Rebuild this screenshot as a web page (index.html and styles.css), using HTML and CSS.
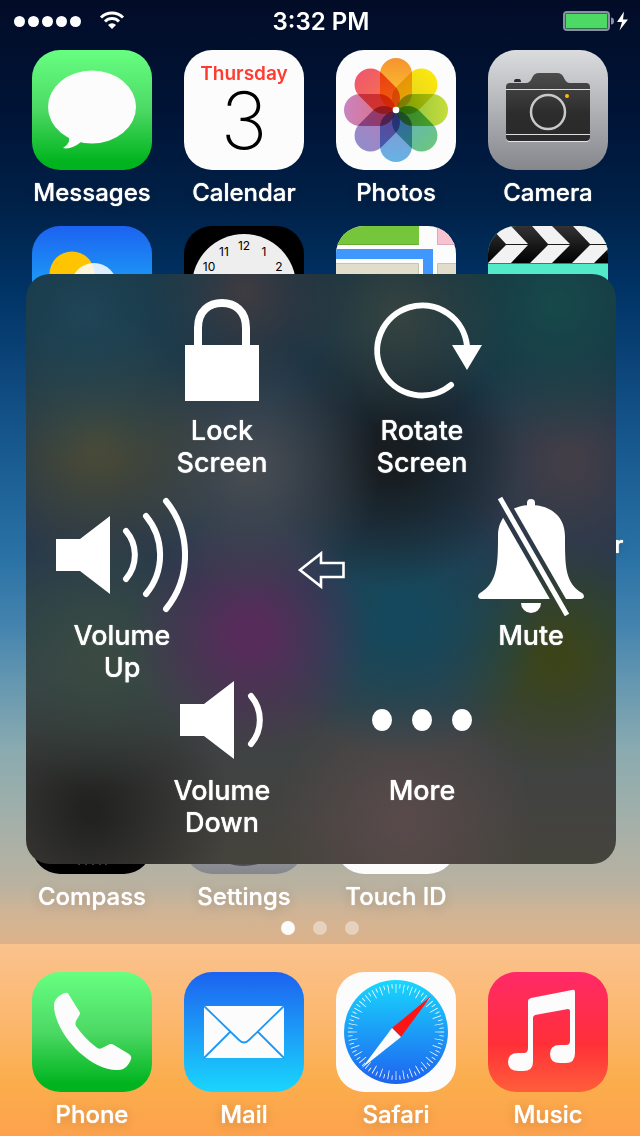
FILE: index.html
```html
<!DOCTYPE html>
<html lang="en">
<head>
    <meta charset="UTF-8">
    <meta name="viewport" content="width=device-width, initial-scale=1.0">
    <title>Home Screen</title>
    <link rel="stylesheet" href="styles.css">
</head>
<body>
    <div class="phone">
        <header class="status-bar">
            <div class="status-left">
                <span class="signal"><i></i><i></i><i></i><i></i><i></i></span>
                <svg width="26" height="20" viewBox="0 0 26 20" fill="none" stroke="#fff" stroke-width="3">
                    <path d="M2 6.500a15.500 15.500 0 0 1 22 0"/>
                    <path d="M6 10.500a9.900 9.900 0 0 1 14 0"/>
                    <path d="M13 18l-4-4a5.700 5.700 0 0 1 8 0z" fill="#fff" stroke="none"/>
                </svg>
            </div>
            <time>3:32 PM</time>
            <div class="status-right">
                <svg width="66" height="22" viewBox="0 0 66 22">
                    <rect x="2" y="2" width="45" height="18" rx="3" fill="none" stroke="#8b91a3" stroke-width="2"/>
                    <rect x="3.500" y="3.500" width="42" height="15" rx="1" fill="#4cd964"/>
                    <path d="M49 7.500q3 0 3 3.500t-3 3.500z" fill="#8b91a3"/>
                    <path d="M62 1.500L55 12h5l-2.500 8.500L66 9.500h-5z" fill="#fff"/>
                </svg>
            </div>
        </header>

        <main class="home">
            <a class="app" href="#messages">
                <svg class="icon" viewBox="0 0 120 120">
                    <defs>
                        <linearGradient id="green" x2="0" y2="1">
                            <stop offset="0" stop-color="#67ff81"/>
                            <stop offset=".5" stop-color="#4cd964"/>
                            <stop offset=".93" stop-color="#01b41f"/>
                        </linearGradient>
                    </defs>
                    <rect width="120" height="120" fill="url(#green)"/>
                    <ellipse cx="60" cy="57" rx="44" ry="36.500" fill="#fcfcfc"/>
                    <path d="M36 86q4 6-5 12q8 2 18-6z" fill="#fcfcfc"/>
                </svg>
                <span class="label">Messages</span>
            </a>
            <a class="app" href="#calendar">
                <svg class="icon" viewBox="0 0 120 120">
                    <rect width="120" height="120" fill="#fcfcfc"/>
                    <text class="cal-day" x="60" y="30">Thursday</text>
                    <text class="cal-date" x="60" y="99">3</text>
                </svg>
                <span class="label">Calendar</span>
            </a>
            <a class="app" href="#photos">
                <svg class="icon" viewBox="0 0 120 120">
                    <defs>
                        <linearGradient id="p1" x2="0" y2="1"><stop stop-color="#f59331"/><stop offset="1" stop-color="#fdd02b"/></linearGradient>
                        <linearGradient id="p2" x2="0" y2="1"><stop stop-color="#fbe70f"/><stop offset="1" stop-color="#e0cf20"/></linearGradient>
                        <linearGradient id="p3" x2="0" y2="1"><stop stop-color="#c6dd3c"/><stop offset="1" stop-color="#86bd40"/></linearGradient>
                        <linearGradient id="p4" x2="0" y2="1"><stop stop-color="#6cc67c"/><stop offset="1" stop-color="#60b0d0"/></linearGradient>
                        <linearGradient id="p5" x2="0" y2="1"><stop stop-color="#66b3e6"/><stop offset="1" stop-color="#8a8fcc"/></linearGradient>
                        <linearGradient id="p6" x2="0" y2="1"><stop stop-color="#928ccb"/><stop offset="1" stop-color="#b87ab8"/></linearGradient>
                        <linearGradient id="p7" x2="0" y2="1"><stop stop-color="#c884c0"/><stop offset="1" stop-color="#e66a74"/></linearGradient>
                        <linearGradient id="p8" x2="0" y2="1"><stop stop-color="#f0586c"/><stop offset="1" stop-color="#f47a44"/></linearGradient>
                    </defs>
                    <rect width="120" height="120" fill="#fcfcfc"/>
                    <g class="petals">
                        <rect x="44" y="8" width="32" height="51" rx="16" fill="url(#p1)"/>
                        <rect x="44" y="8" width="32" height="51" rx="16" fill="url(#p2)" transform="rotate(45 60 60)"/>
                        <rect x="44" y="8" width="32" height="51" rx="16" fill="url(#p3)" transform="rotate(90 60 60)"/>
                        <rect x="44" y="8" width="32" height="51" rx="16" fill="url(#p4)" transform="rotate(135 60 60)"/>
                        <rect x="44" y="8" width="32" height="51" rx="16" fill="url(#p5)" transform="rotate(180 60 60)"/>
                        <rect x="44" y="8" width="32" height="51" rx="16" fill="url(#p6)" transform="rotate(225 60 60)"/>
                        <rect x="44" y="8" width="32" height="51" rx="16" fill="url(#p7)" transform="rotate(270 60 60)"/>
                        <rect x="44" y="8" width="32" height="51" rx="16" fill="url(#p8)" transform="rotate(315 60 60)"/>
                    </g>
                    <circle cx="60" cy="60" r="3.300" fill="#fff"/>
                </svg>
                <span class="label">Photos</span>
            </a>
            <a class="app" href="#camera">
                <svg class="icon" viewBox="0 0 120 120">
                    <defs>
                        <linearGradient id="silver" x2="0" y2="1"><stop stop-color="#dbdcde"/><stop offset="1" stop-color="#85878d"/></linearGradient>
                        <linearGradient id="body" x2="0" y2="1"><stop stop-color="#4c4c4c"/><stop offset=".6" stop-color="#2c2c2c"/><stop offset="1" stop-color="#2a2a2a"/></linearGradient>
                    </defs>
                    <rect width="120" height="120" fill="url(#silver)"/>
                    <path d="M26 32q0-3 2-3h3q2 0 2 3z" fill="#2b2b2b"/>
                    <path d="M18 38q0-4 4-4h16q4 0 6-5t7-5h18q5 0 7 5t6 5h16q4 0 4 4v50q0 4-4 4H22q-4 0-4-4z" fill="#e6e6e8"/>
                    <path d="M18 37q0-4 4-4h16q4 0 6-5t7-5h18q5 0 7 5t6 5h16q4 0 4 4v50q0 4-4 4H22q-4 0-4-4z" fill="url(#body)"/>
                    <path d="M18 39.500h84M18 84.500h84" stroke="#dedede"/>
                    <circle cx="60" cy="62" r="17" fill="none" stroke="#c8c8cb" stroke-width="2.500"/>
                    <circle cx="79" cy="46" r="2" fill="#fdb90f"/>
                </svg>
                <span class="label">Camera</span>
            </a>

            <a class="app" href="#weather" aria-label="Weather">
                <svg class="icon" viewBox="0 0 120 120">
                    <defs>
                        <linearGradient id="blue" x2="0" y2="1"><stop stop-color="#1d62f0"/><stop offset="1" stop-color="#1ad6fd"/></linearGradient>
                    </defs>
                    <rect width="120" height="120" fill="url(#blue)"/>
                    <circle cx="40" cy="48" r="22.500" fill="#ffc400"/>
                    <circle cx="62" cy="60" r="23" fill="#fff" opacity=".85"/>
                </svg>
            </a>
            <a class="app" href="#clock" aria-label="Clock">
                <svg class="icon" viewBox="0 0 120 120">
                    <rect width="120" height="120"/>
                    <circle cx="60" cy="60" r="52" fill="#eee"/>
                    <g class="clock-num">
                        <text x="60" y="24">12</text>
                        <text x="40" y="30">11</text>
                        <text x="80" y="30">1</text>
                        <text x="25" y="45">10</text>
                        <text x="95" y="45">2</text>
                    </g>
                </svg>
            </a>
            <a class="app" href="#maps" aria-label="Maps">
                <svg class="icon" viewBox="0 0 120 120">
                    <rect width="120" height="120" fill="#fcfcfc"/>
                    <path d="M0 0h83v19H0z" fill="#76c63b"/>
                    <path d="M0 18.500h83" stroke="#68ae35"/>
                    <path d="M101 0h19v19h-19z" fill="#f7c3d0"/>
                    <path d="M101.500 0v18.500H120" fill="none" stroke="#dcaab6"/>
                    <path d="M0 28h92v40" fill="none" stroke="#4098ff" stroke-width="10"/>
                    <path d="M-1 37.500h83.500V70H-1zM101.500 37.500H121V70h-19.500z" fill="#e2dcca" stroke="#c9c3b2"/>
                </svg>
            </a>
            <a class="app" href="#videos" aria-label="Videos">
                <svg class="icon" viewBox="0 0 120 120">
                    <defs>
                        <linearGradient id="clap" x2="0" y2="1"><stop stop-color="#333"/><stop offset="1" stop-color="#000"/></linearGradient>
                    </defs>
                    <rect width="120" height="120" fill="#52eac8"/>
                    <rect width="120" height="37" fill="url(#clap)"/>
                    <path d="M0 0h23l17 18H18L6 5zM44 0h20l18 18H60zM85 0h22l17 18h-22zM18 19h22L23 37H0zM60 19h22L64 37H42zM102 19h22l-18 18H84z" fill="#f2f2f2"/>
                    <path d="M0 37.500h120" stroke="#3a7d70"/>
                </svg>
            </a>

            <a class="app game-center" href="#game-center"><span class="label">Game Center</span></a>

            <a class="app last-row" href="#compass">
                <svg class="icon" viewBox="0 0 120 120">
                    <rect width="120" height="120"/>
                    <path d="M47 108v3M54 108v3M61 108v3M68 108v3M74 108v3" stroke="#777"/>
                </svg>
                <span class="label">Compass</span>
            </a>
            <a class="app last-row" href="#settings">
                <svg class="icon" viewBox="0 0 120 120">
                    <rect width="120" height="120" fill="url(#silver)"/>
                    <circle cx="60" cy="60" r="52" fill="#4d4e52"/>
                </svg>
                <span class="label">Settings</span>
            </a>
            <a class="app last-row" href="#touch-id">
                <svg class="icon" viewBox="0 0 120 120"><rect width="120" height="120" fill="#fcfcfc"/></svg>
                <span class="label">Touch ID</span>
            </a>
        </main>

        <div class="pages"><i class="current"></i><i></i><i></i></div>

        <nav class="dock">
            <a class="app" href="#phone">
                <svg class="icon" viewBox="0 0 120 120">
                    <rect width="120" height="120" fill="url(#green)"/>
                    <path d="M33 21C27 23 22 27 22 34C23 62 58 99 86 98C93 98 97 93 99 87Q100 84 97 82L82 73Q79 71 76 73L70 76Q67 78 64 75C56 69 49 61 44 54Q43 52 44 49L48 42Q48 40 47 39L37 23Q36 20 33 21Z" fill="#fcfcfc"/>
                </svg>
                <span class="label">Phone</span>
            </a>
            <a class="app" href="#mail">
                <svg class="icon" viewBox="0 0 120 120">
                    <rect width="120" height="120" fill="url(#blue)"/>
                    <rect x="20" y="34" width="80" height="52" rx="1" fill="#fcfcfc"/>
                    <path d="M20 34l35 34q5 5 10 0l35-34M20 86l26-26M100 86L74 60" fill="none" stroke="#1f97f5" stroke-width="1.800"/>
                </svg>
                <span class="label">Mail</span>
            </a>
            <a class="app" href="#safari">
                <svg class="icon" viewBox="0 0 120 120">
                    <defs>
                        <linearGradient id="dial" x2="0" y2="1"><stop stop-color="#19d7fd"/><stop offset="1" stop-color="#1e62f0"/></linearGradient>
                    </defs>
                    <rect width="120" height="120" fill="#fcfcfc"/>
                    <circle cx="60" cy="60" r="52" fill="url(#dial)"/>
                    <g fill="none" stroke="#fff">
                        <circle cx="60" cy="60" r="43.500" stroke-width="9" pathLength="360" stroke-dasharray="1 9" stroke-dashoffset=".5"/>
                        <circle cx="60" cy="60" r="45.800" stroke-width="4.500" pathLength="360" stroke-dasharray="1 9" stroke-dashoffset="5.500"/>
                    </g>
                    <path d="M95 24L56 56l9 9z" fill="#ff1414"/>
                    <path d="M26 96l30-40 9 9z" fill="#fcfcfc"/>
                </svg>
                <span class="label">Safari</span>
            </a>
            <a class="app" href="#music">
                <svg class="icon" viewBox="0 0 120 120">
                    <defs>
                        <linearGradient id="pink" x2="0" y2="1"><stop stop-color="#ff2a68"/><stop offset=".6" stop-color="#ff3038"/><stop offset="1" stop-color="#ff5e3a"/></linearGradient>
                    </defs>
                    <rect width="120" height="120" fill="url(#pink)"/>
                    <path d="M45 46V90Q45 99 35 99H31Q20 99 20 90Q20 81 30 81H36Q40 81 40 76V29Q40 27 43 26L84 18Q87 17 87 20V81Q87 91 78 91H72Q62 91 62 82Q62 73 72 73H78Q82 73 82 69V39Q82 37 80 37L47 43Q45 44 45 46Z" fill="#fcfcfc"/>
                </svg>
                <span class="label">Music</span>
            </a>
        </nav>

        <section class="assistive" aria-label="AssistiveTouch">
            <div class="row row-top">
                <button class="control" type="button">
                    <svg width="74" height="104" viewBox="0 0 74 104">
                        <rect y="47" width="74" height="56" fill="#fff"/>
                        <path d="M13 47V30C13 13 24 5 37 5s24 8 24 25v17" fill="none" stroke="#fff" stroke-width="8"/>
                    </svg>
                    <span>Lock<br>Screen</span>
                </button>
                <button class="control" type="button">
                    <svg width="122" height="104" viewBox="0 0 122 104">
                        <path d="M90 87A45 45 0 1 1 106 48" fill="none" stroke="#fff" stroke-width="6" stroke-linecap="round"/>
                        <path d="M91 47h30l-15 25z" fill="#fff"/>
                    </svg>
                    <span>Rotate<br>Screen</span>
                </button>
            </div>
            <div class="row row-middle">
                <button class="control" type="button">
                    <svg width="132" height="120" viewBox="0 0 132 120">
                        <path d="M0 43h24l30-23v78L24 75H0z" fill="#fff"/>
                        <path d="M70 35a37 37 0 0 1 0 48M90 20a61 61 0 0 1 0 78M110 5a86 86 0 0 1 0 108" fill="none" stroke="#fff" stroke-width="6" stroke-linecap="round"/>
                    </svg>
                    <span>Volume<br>Up</span>
                </button>
                <button class="back" type="button" aria-label="Back">
                    <svg width="48" height="40" viewBox="0 0 48 40">
                        <path d="M3 20L24 3.500V13h22.500v14H24v9.500z" fill="none" stroke="#fff" stroke-width="2.600"/>
                    </svg>
                </button>
                <button class="control mute" type="button">
                    <svg width="106" height="120" viewBox="0 0 106 120">
                        <mask id="slash">
                            <rect width="106" height="120" fill="#fff"/>
                            <path d="M19 -3L92 124" stroke="#000" stroke-width="14"/>
                        </mask>
                        <g mask="url(#slash)" fill="#fff">
                            <rect x="49" y="3" width="8" height="12" rx="4"/>
                            <path d="M53 9C33 9 20 21 20 40C20 70 19 87 2 97Q0 98 0 101Q1 103 3 103H103Q105 103 106 101Q106 98 104 97C87 87 87 70 87 40C87 21 73 9 53 9Z"/>
                        </g>
                        <path d="M43 107h20a10 10 0 0 1-20 0z" fill="#fff"/>
                        <path d="M22 2l67 117" stroke="#fff" stroke-width="5"/>
                    </svg>
                    <span>Mute</span>
                </button>
            </div>
            <div class="row row-bottom">
                <button class="control" type="button">
                    <svg width="84" height="78" viewBox="0 0 84 78">
                        <path d="M0 23h24L54 0v78L24 55H0z" fill="#fff"/>
                        <path d="M71 15a37 37 0 0 1 0 48" fill="none" stroke="#fff" stroke-width="6" stroke-linecap="round"/>
                    </svg>
                    <span>Volume<br>Down</span>
                </button>
                <button class="control" type="button">
                    <svg width="100" height="78" viewBox="0 0 100 78" fill="#fff">
                        <ellipse cx="10" cy="39" rx="10" ry="11"/>
                        <ellipse cx="50" cy="39" rx="10" ry="11"/>
                        <ellipse cx="90" cy="39" rx="10" ry="11"/>
                    </svg>
                    <span>More</span>
                </button>
            </div>
        </section>
    </div>
</body>
</html>
```
FILE: styles.css
```css
* {
    box-sizing: border-box;
}
body {
    margin: 0;
    font-family: Inter, 'Liberation Sans', Helvetica, Arial, sans-serif;
    font-weight: 500;
    color: #fff;
}
svg {
    display: block;
    flex-shrink: 0;
}
.phone {
    position: relative;
    min-height: 100vh;
    display: flex;
    flex-direction: column;
    background: linear-gradient(#020c27 0%, #001437 10%, #002148 18%, #003264 25%, #0b4479 32%, #1c6096 42%, #2a72a5 49%, #4483af 55%, #6497b0 60%, #8aabb0 66%, #a6b0a8 73%, #bab2a0 78%, #ceb497 80%, #dcb28a 83%, #dcb28a 100%);
}

/* status bar */
.status-bar {
    display: grid;
    grid-template-columns: 1fr auto 1fr;
    align-items: center;
    height: 40px;
    padding: 0 12px 0 14px;
}
.status-bar time {
    font-size: 24px;
    font-weight: 600;
    line-height: 40px;
    padding-top: 2px;
}
.status-left {
    display: flex;
    align-items: center;
    gap: 18px;
}
.status-right {
    display: flex;
    justify-content: flex-end;
}
.signal {
    display: flex;
    gap: 3px;
}
.signal i {
    width: 11px;
    height: 11px;
    border-radius: 50%;
    background: #fff;
}

/* app icons */
.home,
.dock {
    display: grid;
    grid-template-columns: repeat(4, 120px);
    justify-content: space-between;
    padding: 10px 32px 0;
}
.home {
    grid-template-rows: repeat(5, 158px);
    row-gap: 18px;
}
.app {
    display: flex;
    flex-direction: column;
    align-items: center;
    gap: 8px;
    color: inherit;
    text-decoration: none;
}
.icon {
    width: 120px;
    height: 120px;
    border-radius: 28px;
}
.label {
    font-size: 24px;
    line-height: 30px;
    white-space: nowrap;
    text-shadow: 0 0 1px #fff, 0 2px 12px rgba(0, 0, 0, 0.2);
}
.game-center {
    grid-area: 3 / 4;
    justify-content: flex-end;
}
.last-row {
    grid-row: 5;
}
.cal-day {
    font-size: 19px;
    font-weight: 600;
    fill: #ff3b30;
    text-anchor: middle;
}
.cal-date {
    font-size: 79px;
    font-weight: 200;
    text-anchor: middle;
}
.clock-num {
    font-size: 12px;
    font-weight: 400;
    text-anchor: middle;
}
.petals {
    isolation: isolate;
}
.petals rect {
    mix-blend-mode: multiply;
}

.pages {
    display: flex;
    justify-content: center;
    align-items: center;
    gap: 18px;
    height: 32px;
}
.pages i {
    width: 14px;
    height: 14px;
    border-radius: 50%;
    background: rgba(255, 255, 255, 0.4);
}
.pages .current {
    background: #fcfcfc;
}
.dock {
    flex: 1;
    align-content: start;
    padding: 28px 32px 6px;
    background: linear-gradient(#fac28e, #fcb66a 45%, #fbad4c 72%, #fda24c);
}

/* floating panel */
.assistive {
    position: absolute;
    top: 274px;
    left: 26px;
    right: 24px;
    min-height: 590px;
    padding: 24px 0 0 2px;
    border-radius: 24px;
    background:
        radial-gradient(circle at 10% 7%, #1f4556, transparent 150px),
        radial-gradient(circle at 37% 3%, #3f3c42, transparent 100px),
        radial-gradient(circle at 63% 7%, #364440, transparent 110px),
        radial-gradient(circle at 90% 5%, #17494a, transparent 140px),
        radial-gradient(circle at 12% 29%, #4a4a36 10px, transparent 130px),
        radial-gradient(circle at 38% 33%, #464b51 10px, transparent 130px),
        radial-gradient(circle at 62% 31%, #171d21 20px, transparent 130px),
        radial-gradient(circle at 92% 32%, #423e47 10px, transparent 120px),
        radial-gradient(circle at 38% 61%, #562d5a 20px, transparent 120px),
        radial-gradient(circle at 64% 58%, #15485c 20px, transparent 140px),
        radial-gradient(circle at 90% 65%, #3b4418 10px, transparent 120px),
        radial-gradient(circle at 12% 65%, #3a4a42 10px, transparent 130px),
        radial-gradient(circle at 11% 91%, #222221 10px, transparent 140px),
        radial-gradient(circle at 64% 93%, #584a4a 10px, transparent 130px),
        linear-gradient(#14303f, #1b3448 25%, #26374c 45%, #28404a 60%, #3e4244 78%, #45433c);
}
.row {
    display: flex;
    justify-content: center;
}
.control,
.back {
    display: flex;
    flex-direction: column;
    align-items: center;
    padding: 0;
    border: none;
    background: none;
    color: #fff;
    font: inherit;
    font-size: 27px;
    line-height: 32px;
    text-shadow: 0 0 1px #fff;
    cursor: pointer;
}
.control {
    width: 200px;
    gap: 13px;
}
.row-top {
    margin-bottom: 17px;
}
.row-middle {
    display: grid;
    grid-template-columns: 188px 1fr 190px;
    align-items: start;
}
.row-middle .control {
    width: auto;
    gap: 4px;
}
.row-middle .mute {
    padding-left: 20px;
}
.back {
    height: 148px;
    justify-content: center;
}
.row-bottom {
    align-items: flex-start;
}
.row-bottom svg {
    margin: -3px 0;
}
.row-bottom .control {
    gap: 19px;
}
```
